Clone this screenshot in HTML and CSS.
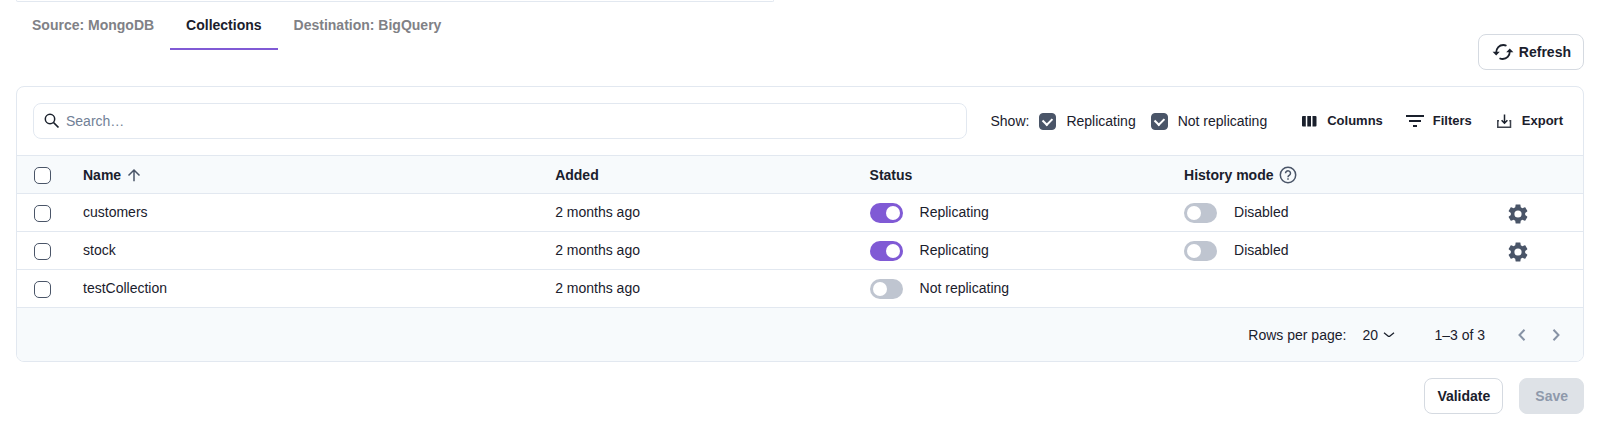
FILE: index.html
```html
<!DOCTYPE html>
<html lang="en">
<head>
<meta charset="utf-8">
<title>Collections</title>
<link rel="stylesheet" href="styles.css">
</head>
<body>
<div class="page">
  <div class="summary-card"></div>

  <header class="page-head">
    <nav class="tabs">
      <a class="tab" href="#source">Source: MongoDB</a>
      <a class="tab tab-active" href="#collections" aria-current="page">Collections</a>
      <a class="tab" href="#destination">Destination: BigQuery</a>
    </nav>
    <button class="btn btn-refresh" type="button">
      <svg class="icon-refresh" viewBox="0 0 22 18" aria-hidden="true">
        <path d="M4.200 9.500C4.200 5 7.400 2 11.200 2c1.200 0 2.300.3 3.300.8" fill="none" stroke="currentColor" stroke-width="1.800"/>
        <path d="M17.800 8.500C17.800 13 14.600 16 10.800 16c-1.200 0-2.300-.3-3.300-.8" fill="none" stroke="currentColor" stroke-width="1.800"/>
        <path d="M.6 8.800h7.200L4.200 12.400zM14.200 9.200h7.200L17.800 5.600z" fill="currentColor"/>
      </svg>
      Refresh
    </button>
  </header>

  <section class="panel">
    <div class="toolbar">
      <label class="search">
        <svg class="icon-search" viewBox="0 0 16 16" aria-hidden="true">
          <circle cx="6" cy="6" r="4.700" fill="none" stroke="currentColor" stroke-width="1.500"/>
          <path d="M9.500 9.500l5 5" stroke="currentColor" stroke-width="1.700"/>
        </svg>
        <input class="search-input" type="search" placeholder="Search…" aria-label="Search">
      </label>
      <div class="show">
        <span class="show-title">Show:</span>
        <label class="show-option"><input class="check" type="checkbox" checked>Replicating</label>
        <label class="show-option"><input class="check" type="checkbox" checked>Not replicating</label>
      </div>
      <div class="tools">
        <button class="tool" type="button">
          <svg class="icon" viewBox="0 0 20 20" fill="currentColor" aria-hidden="true"><path d="M4 5h2.800v10.500H4a1 1 0 0 1-1-1V6a1 1 0 0 1 1-1zM8.300 5h3.700v10.500H8.300zM13.500 5H16.500a1 1 0 0 1 1 1v8.500a1 1 0 0 1-1 1h-3z"/></svg>
          Columns
        </button>
        <button class="tool" type="button">
          <svg class="icon" viewBox="0 0 20 20" fill="currentColor" aria-hidden="true"><path d="M1 4h18v2H1zM4 9h12v2H4zM8 14h4v2H8z"/></svg>
          Filters
        </button>
        <button class="tool" type="button">
          <svg class="icon" viewBox="0 0 20 20" fill="none" stroke="currentColor" stroke-width="1.500" aria-hidden="true"><path d="M5 9.700H3.800V16.200h12.700V9.700h-1.200" opacity=".85"/><path d="M10.500 3.500v8.500M7.600 9.300l2.900 2.900 2.900-2.900"/></svg>
          Export
        </button>
      </div>
    </div>

    <table class="grid">
      <colgroup>
        <col class="col-check"><col class="col-name"><col class="col-mid"><col class="col-mid"><col class="col-mid"><col>
      </colgroup>
      <thead>
        <tr>
          <th><input class="check" type="checkbox" aria-label="Select all rows"></th>
          <th><span class="cell">Name
            <svg class="icon-sort" viewBox="0 0 14 14" fill="none" stroke="currentColor" stroke-width="1.500" aria-hidden="true"><path d="M7 13.300V2.300M1.500 7.500L7 2l5.500 5.500"/></svg>
          </span></th>
          <th>Added</th>
          <th>Status</th>
          <th><span class="cell">History mode
            <svg class="icon-help" viewBox="0 0 18 18" fill="none" stroke="currentColor" stroke-width="1.500" aria-hidden="true"><circle cx="9" cy="9" r="7.700"/><path d="M6.500 7.300a2.500 2.400 0 1 1 4 1.900C9.500 9.900 9 10.100 9 11.200M9 12.300v1.500"/></svg>
          </span></th>
          <th aria-label="Actions"></th>
        </tr>
      </thead>
      <tbody>
        <tr>
          <td><input class="check" type="checkbox" aria-label="Select customers"></td>
          <td>customers</td>
          <td>2 months ago</td>
          <td class="toggle-cell"><label class="toggle"><input class="switch" type="checkbox" checked><span class="toggle-text">Replicating</span></label></td>
          <td class="toggle-cell"><label class="toggle"><input class="switch" type="checkbox"><span class="toggle-text">Disabled</span></label></td>
          <td class="actions"><button class="gear" type="button" aria-label="Settings for customers"><svg class="icon-gear" viewBox="2 2 20 20" fill="currentColor" aria-hidden="true"><path d="M19.140 12.940c.04-.3.060-.610.060-.940 0-.320-.020-.640-.070-.940l2.030-1.580c.180-.140.230-.410.120-.610l-1.920-3.320c-.120-.220-.370-.290-.590-.220l-2.390.960c-.5-.380-1.030-.7-1.620-.940L14.400 2.810c-.040-.240-.240-.410-.480-.410h-3.840c-.240 0-.430.170-.470.410L9.250 5.350c-.590.240-1.130.570-1.620.940l-2.390-.960c-.220-.080-.470 0-.590.220L2.740 8.870c-.120.210-.080.470.120.610l2.030 1.580c-.050.300-.090.630-.090.940s.020.640.070.940l-2.030 1.580c-.180.140-.230.410-.120.610l1.920 3.320c.120.220.370.290.590.220l2.390-.960c.5.380 1.030.7 1.620.940l.36 2.540c.050.240.240.410.480.410h3.840c.240 0 .440-.170.470-.410l.36-2.540c.590-.240 1.130-.560 1.620-.940l2.390.960c.220.080.470 0 .590-.220l1.920-3.320c.120-.220.070-.470-.120-.610zM12 15.600A3.600 3.600 0 1 1 12 8.400a3.600 3.600 0 0 1 0 7.200z"/></svg></button></td>
        </tr>
        <tr>
          <td><input class="check" type="checkbox" aria-label="Select stock"></td>
          <td>stock</td>
          <td>2 months ago</td>
          <td class="toggle-cell"><label class="toggle"><input class="switch" type="checkbox" checked><span class="toggle-text">Replicating</span></label></td>
          <td class="toggle-cell"><label class="toggle"><input class="switch" type="checkbox"><span class="toggle-text">Disabled</span></label></td>
          <td class="actions"><button class="gear" type="button" aria-label="Settings for stock"><svg class="icon-gear" viewBox="2 2 20 20" fill="currentColor" aria-hidden="true"><path d="M19.140 12.940c.04-.3.060-.610.060-.940 0-.320-.020-.640-.070-.940l2.030-1.580c.180-.140.230-.410.120-.610l-1.920-3.320c-.120-.220-.370-.290-.590-.220l-2.390.960c-.5-.380-1.030-.7-1.620-.940L14.400 2.810c-.040-.240-.240-.410-.480-.410h-3.840c-.240 0-.430.170-.470.410L9.250 5.350c-.590.240-1.130.570-1.620.940l-2.390-.960c-.220-.080-.470 0-.590.220L2.740 8.870c-.120.210-.080.470.120.610l2.030 1.580c-.050.300-.090.630-.090.940s.020.640.070.940l-2.030 1.580c-.180.140-.230.410-.120.610l1.920 3.320c.120.220.370.290.590.220l2.390-.960c.5.380 1.030.7 1.620.940l.36 2.540c.050.240.240.410.480.410h3.840c.240 0 .440-.170.470-.410l.36-2.540c.590-.240 1.130-.560 1.620-.940l2.390.960c.220.080.470 0 .590-.220l1.920-3.320c.120-.220.070-.470-.120-.610zM12 15.600A3.600 3.600 0 1 1 12 8.400a3.600 3.600 0 0 1 0 7.200z"/></svg></button></td>
        </tr>
        <tr>
          <td><input class="check" type="checkbox" aria-label="Select testCollection"></td>
          <td>testCollection</td>
          <td>2 months ago</td>
          <td class="toggle-cell"><label class="toggle"><input class="switch" type="checkbox"><span class="toggle-text">Not replicating</span></label></td>
          <td></td>
          <td></td>
        </tr>
      </tbody>
    </table>

    <div class="pager">
      <label class="pager-label" for="page-size">Rows per page:</label>
      <span class="pager-size">
        <select class="pager-select" id="page-size"><option>20</option><option>50</option></select>
        <svg class="icon-down" viewBox="0 0 12 8" fill="none" stroke="currentColor" stroke-width="1.300" aria-hidden="true"><path d="M1 1.800l4 3.200q1 .8 2 0l4-3.200"/></svg>
      </span>
      <span class="pager-range">1–3 of 3</span>
      <div class="pager-nav">
        <button class="page-btn" type="button" aria-label="Previous page" disabled><svg class="icon-page" viewBox="0 0 10 14" fill="none" stroke="currentColor" stroke-width="2" aria-hidden="true"><path d="M7.500 1.700L2.500 7l5 5.300"/></svg></button>
        <button class="page-btn" type="button" aria-label="Next page" disabled><svg class="icon-page" viewBox="0 0 10 14" fill="none" stroke="currentColor" stroke-width="2" aria-hidden="true"><path d="M2.500 1.700L7.500 7l-5 5.300"/></svg></button>
      </div>
    </div>
  </section>

  <footer class="page-foot">
    <button class="btn" type="button">Validate</button>
    <button class="btn btn-save" type="button" disabled>Save</button>
  </footer>
</div>
</body>
</html>
```

FILE: styles.css
```css
* {
  box-sizing: border-box;
}

body {
  margin: 0;
  background: #fff;
  color: #1a202c;
  font: 14px/20px "Liberation Sans", Arial, sans-serif;
}

button,
input,
select {
  margin: 0;
  color: inherit;
  font: inherit;
}

svg {
  flex: none;
}

.page {
  padding: 0 16px 12px;
}

.summary-card {
  width: 758px;
  max-width: 100%;
  height: 2px;
  border: 1px solid #e2e8f0;
  border-top: 0;
  border-radius: 0 0 8px 8px;
}

.page-head {
  display: flex;
  align-items: flex-end;
  justify-content: space-between;
  padding-bottom: 16px;
}

.tabs {
  display: flex;
  align-self: flex-start;
}

.tab {
  height: 48px;
  padding: 13px 16px;
  color: #808186;
  font-weight: 700;
  text-decoration: none;
}

.tab-active {
  border-bottom: 2px solid #805ad5;
  color: #1a202c;
}

.btn {
  display: flex;
  align-items: center;
  justify-content: center;
  height: 36px;
  padding: 0 12px;
  border: 1px solid #d5dae1;
  border-radius: 8px;
  background: #fff;
  font-weight: 700;
}

.btn-refresh {
  gap: 5px;
  margin-top: 32px;
  padding-left: 13px;
}

.icon-refresh {
  width: 22px;
  height: 18px;
}

.btn-save {
  padding: 0 15px;
  border-color: #dee2e7;
  background: #dee2e7;
  color: #8e99ab;
}

.panel {
  border: 1px solid #e2e8f0;
  border-radius: 8px;
  overflow: hidden;
}

.toolbar {
  display: flex;
  align-items: center;
  gap: 24px;
  padding: 16px 20px 16px 16px;
}

.search {
  display: flex;
  flex: 1;
  align-items: center;
  gap: 6px;
  height: 36px;
  padding: 0 10px;
  border: 1px solid #e2e8f0;
  border-radius: 8px;
}

.icon-search {
  width: 16px;
  height: 16px;
}

.search-input {
  flex: 1;
  min-width: 0;
  padding: 0;
  border: 0;
  outline: 0;
  background: none;
}

.search-input::placeholder {
  color: #718096;
}

.show {
  display: flex;
  align-items: center;
  gap: 15px;
  margin-right: 8px;
}

.show-title {
  margin-right: -5px;
}

.show-option {
  display: flex;
  align-items: center;
  gap: 10px;
}

.check {
  appearance: none;
  display: block;
  flex: none;
  width: 17px;
  height: 17px;
  border: 1px solid #4a5568;
  border-radius: 5px;
  background: #fff;
}

.check:checked {
  display: grid;
  place-items: center;
  border-radius: 4px;
  background: #4a5568;
}

.check:checked::before {
  width: 7px;
  height: 5px;
  margin-bottom: 2px;
  border: solid #fff;
  border-width: 0 0 2px 2px;
  content: "";
  transform: rotate(-45deg);
}

.tools {
  display: flex;
  gap: 22px;
}

.tool {
  display: flex;
  align-items: center;
  gap: 8px;
  padding: 0;
  border: 0;
  background: none;
  font-size: 13px;
  font-weight: 700;
}

.icon {
  width: 20px;
  height: 20px;
}

.grid {
  width: 100%;
  border-collapse: separate;
  border-spacing: 0;
  table-layout: fixed;
}

.col-check {
  width: 56px;
}

.col-name {
  width: 30.15%;
}

.col-mid {
  width: 20.08%;
}

.grid th,
.grid td {
  height: 38px;
  padding: 0 10px;
  border-top: 1px solid #e2e8f0;
  text-align: left;
}

.grid td {
  padding-bottom: 2px;
}

.grid th:first-child,
.grid td:first-child {
  padding: 2px 0 0 17px;
}

.grid th {
  background: #f7fafc;
}

.cell {
  display: flex;
  align-items: center;
  gap: 6px;
}

.icon-sort {
  width: 14px;
  height: 14px;
  color: #4a5568;
}

.icon-help {
  width: 18px;
  height: 18px;
  color: #4a5568;
}

.grid .toggle-cell {
  padding-bottom: 0;
}

.toggle {
  display: flex;
  align-items: center;
  gap: 17px;
}

.toggle-text {
  padding-bottom: 2px;
}

.switch {
  appearance: none;
  display: flex;
  align-items: center;
  width: 33px;
  height: 20px;
  padding: 0 3px;
  border-radius: 10px;
  background: #bfc5d0;
}

.switch::before {
  width: 14px;
  height: 14px;
  border-radius: 50%;
  background: #fff;
  content: "";
}

.switch:checked {
  justify-content: flex-end;
  background: #805ad5;
}

.grid .actions {
  padding: 2px 20px 0;
}

.gear {
  display: block;
  padding: 0;
  border: 0;
  background: none;
  color: #4a5568;
}

.icon-gear {
  display: block;
  width: 20px;
  height: 20px;
}

.pager {
  display: flex;
  align-items: center;
  justify-content: flex-end;
  height: 54px;
  padding: 0 16px;
  border-top: 1px solid #e2e8f0;
  background: #f7fafc;
}

.pager-size {
  display: flex;
  align-items: center;
  gap: 5px;
  margin: 0 39px 0 16px;
}

.pager-select {
  appearance: none;
  padding: 0;
  border: 0;
  background: none;
}

.icon-down {
  width: 12px;
  height: 8px;
}

.pager-nav {
  display: flex;
  gap: 12px;
  margin-left: 26px;
}

.page-btn {
  display: grid;
  place-items: center;
  width: 22px;
  height: 22px;
  padding: 0;
  border: 0;
  background: none;
  color: #8793a5;
}

.icon-page {
  width: 10px;
  height: 14px;
}

.page-foot {
  display: flex;
  justify-content: flex-end;
  gap: 16px;
  padding-top: 16px;
}
```
